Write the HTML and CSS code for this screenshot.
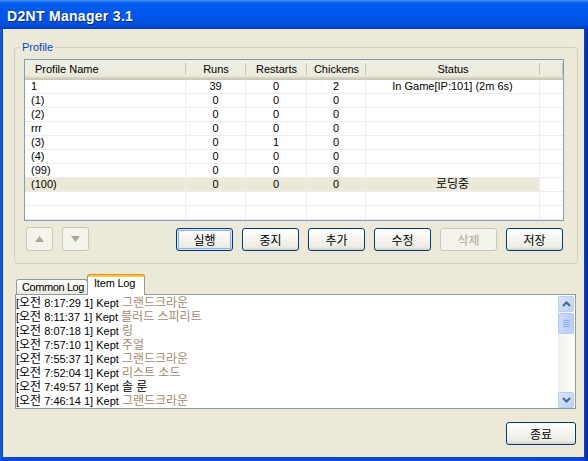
FILE: index.html
```html
<!DOCTYPE html>
<html lang="ko">
<head>
<meta charset="utf-8">
<title>D2NT Manager 3.1</title>
<link rel="stylesheet" href="styles.css">
</head>
<body>
<div class="window">
  <div class="titlebar"><span class="title">D2NT Manager 3.1</span></div>
  <div class="client">
    <div class="group">
      <div class="group-title">Profile</div>
      <div class="listview">
        <div class="lv-head">
          <div class="hc left">Profile Name</div>
          <div class="hc">Runs</div>
          <div class="hc">Restarts</div>
          <div class="hc">Chickens</div>
          <div class="hc">Status</div>
          <div class="hc filler"></div>
        </div>
        <div class="lv-row"><div class="c left">1</div><div class="c">39</div><div class="c">0</div><div class="c">2</div><div class="c">In Game[IP:101] (2m 6s)</div><div class="c filler"></div></div>
        <div class="lv-row"><div class="c left">(1)</div><div class="c">0</div><div class="c">0</div><div class="c">0</div><div class="c"></div><div class="c filler"></div></div>
        <div class="lv-row"><div class="c left">(2)</div><div class="c">0</div><div class="c">0</div><div class="c">0</div><div class="c"></div><div class="c filler"></div></div>
        <div class="lv-row"><div class="c left">rrr</div><div class="c">0</div><div class="c">0</div><div class="c">0</div><div class="c"></div><div class="c filler"></div></div>
        <div class="lv-row"><div class="c left">(3)</div><div class="c">0</div><div class="c">1</div><div class="c">0</div><div class="c"></div><div class="c filler"></div></div>
        <div class="lv-row"><div class="c left">(4)</div><div class="c">0</div><div class="c">0</div><div class="c">0</div><div class="c"></div><div class="c filler"></div></div>
        <div class="lv-row"><div class="c left">(99)</div><div class="c">0</div><div class="c">0</div><div class="c">0</div><div class="c"></div><div class="c filler"></div></div>
        <div class="lv-row selected"><div class="c left">(100)</div><div class="c">0</div><div class="c">0</div><div class="c">0</div><div class="c ko">로딩중</div><div class="c filler"></div></div>
        <div class="lv-row"><div class="c left"></div><div class="c"></div><div class="c"></div><div class="c"></div><div class="c"></div><div class="c filler"></div></div>
        <div class="lv-row"><div class="c left"></div><div class="c"></div><div class="c"></div><div class="c"></div><div class="c"></div><div class="c filler"></div></div>
      </div>
      <div class="btn-row">
        <div class="arrows">
          <button class="btn arrow" disabled><svg width="9" height="6" viewBox="0 0 9 6"><polygon points="4.5,0 9,6 0,6" fill="#ACA899"/></svg></button>
          <button class="btn arrow" disabled><svg width="9" height="6" viewBox="0 0 9 6"><polygon points="0,0 9,0 4.5,6" fill="#ACA899"/></svg></button>
        </div>
        <div class="actions">
          <button class="btn default">실행</button>
          <button class="btn">중지</button>
          <button class="btn">추가</button>
          <button class="btn">수정</button>
          <button class="btn" disabled>삭제</button>
          <button class="btn">저장</button>
        </div>
      </div>
    </div>

    <div class="tabs">
      <div class="tab">Common Log</div>
      <div class="tab active">Item Log</div>
    </div>
    <div class="logbox">
      <div class="log">
        <div class="line">[<span class="ko">오전</span> 8:17:29 1] Kept <span class="ko item">그랜드크라운</span></div>
        <div class="line">[<span class="ko">오전</span> 8:11:37 1] Kept <span class="ko item">블러드 스피리트</span></div>
        <div class="line">[<span class="ko">오전</span> 8:07:18 1] Kept <span class="ko item">링</span></div>
        <div class="line">[<span class="ko">오전</span> 7:57:10 1] Kept <span class="ko item">주얼</span></div>
        <div class="line">[<span class="ko">오전</span> 7:55:37 1] Kept <span class="ko item">그랜드크라운</span></div>
        <div class="line">[<span class="ko">오전</span> 7:52:04 1] Kept <span class="ko item">리스트 소드</span></div>
        <div class="line">[<span class="ko">오전</span> 7:49:57 1] Kept <span class="ko">솔 룬</span></div>
        <div class="line">[<span class="ko">오전</span> 7:46:14 1] Kept <span class="ko item">그랜드크라운</span></div>
      </div>
      <div class="scrollbar">
        <div class="sb-btn"><svg width="9" height="6" viewBox="0 0 9 6"><polyline points="1,5 4.5,1.5 8,5" fill="none" stroke="#4D6185" stroke-width="2"/></svg></div>
        <div class="sb-thumb"><span></span><span></span><span></span><span></span></div>
        <div class="sb-track"></div>
        <div class="sb-btn"><svg width="9" height="6" viewBox="0 0 9 6"><polyline points="1,1 4.5,4.5 8,1" fill="none" stroke="#4D6185" stroke-width="2"/></svg></div>
      </div>
    </div>

    <div class="footer"><button class="btn close">종료</button></div>
  </div>
</div>
</body>
</html>
```

FILE: styles.css
```css
* { box-sizing: border-box; }

html, body {
  margin: 0;
  padding: 0;
  width: 588px;
  height: 461px;
  overflow: hidden;
  background: #0846D4;
}

body {
  font-family: "Liberation Sans", "Noto Sans CJK KR", sans-serif;
  font-size: 11px;
  color: #000;
}

.window {
  width: 588px;
  height: 461px;
  display: flex;
  flex-direction: column;
  background: linear-gradient(to right, #1F63E6 0, #0A48D6 2px, #0846D4 583px, #0535C0 586px, #001E9A 588px);
}

.titlebar {
  height: 29px;
  flex: none;
  display: flex;
  align-items: center;
  padding: 2px 0 0 7px;
  background: linear-gradient(180deg, #4A95F8 0px, #1467F0 2px, #0058EE 5px, #0057EB 15px, #0053E2 22px, #0048D4 26px, #003EC0 29px);
}

.title {
  color: #fff;
  font-family: "Liberation Sans", sans-serif;
  font-weight: bold;
  font-size: 14px;
  letter-spacing: 0.3px;
  text-shadow: 1px 1px 0 #0A2A8A;
}

.client {
  flex: 1;
  margin: 0 4px 4px 3px;
  background: #ECE9D8;
  padding: 18px 4px 0 11px;
  display: flex;
  flex-direction: column;
}

/* group box */
.group {
  width: 564px;
  height: 217px;
  border: 1px solid #D0D0BF;
  border-radius: 4px;
  padding: 0 13px 0 9px;
}

.group-title {
  width: fit-content;
  height: 13px;
  line-height: 13px;
  margin: -7px 0 5px -4px;
  padding: 0 2px;
  background: #ECE9D8;
  color: #0046D5;
}

/* list view */
.listview {
  height: 162px;
  border: 1px solid #7F9DB9;
  background: #fff;
  overflow: hidden;
}

.lv-head,
.lv-row {
  display: grid;
  grid-template-columns: 161px 60px 61px 59px 174px 1fr;
}

.lv-head {
  height: 20px;
  background: linear-gradient(#F0EFE6 0, #EBEADB 16px, #E2DECD 17px, #D6D2C2 18px, #CBC7B8 19px, #CBC7B8 20px);
}

.hc {
  line-height: 18px;
  text-align: center;
  background: linear-gradient(#C7C5B2, #C7C5B2) right 3px / 1px 12px no-repeat;
}

.hc.left { text-align: left; padding-left: 10px; }

.lv-row {
  height: 14px;
}

.c {
  height: 14px;
  line-height: 13px;
  text-align: center;
  border-right: 1px solid #EEEEEE;
  border-bottom: 1px solid #EEEEEE;
  white-space: nowrap;
  overflow: hidden;
}

.c.left { text-align: left; padding-left: 6px; }
.c.filler { border-right: none; }
.c.ko { font-size: 12px; }

.lv-row.selected .c:not(.filler) { background: #ECE9D8; }

/* buttons */
.btn-row {
  margin-top: 7px;
  height: 23px;
  display: flex;
  justify-content: space-between;
  padding: 0 1px 0 2px;
}

.arrows, .actions {
  display: flex;
  gap: 9px;
}

.btn {
  width: 57px;
  height: 23px;
  padding: 0;
  border: 1px solid #003C74;
  border-radius: 3px;
  background: linear-gradient(#FFFFFF 0, #F7F6F1 40%, #ECEBE6 85%, #D6D0C5 100%);
  font-family: "Noto Sans CJK KR", "Liberation Sans", sans-serif;
  font-size: 12px;
  line-height: 20px;
  color: #000;
  display: flex;
  align-items: center;
  justify-content: center;
}

.btn.default {
  box-shadow: inset 0 0 0 1px #CEE7FF, inset 0 0 0 2px #8DB2EF;
}

.btn:disabled {
  border-color: #C9C7BA;
  background: #F5F4EA;
  color: #ACA899;
}

.btn.arrow {
  width: 27px;
  height: 24px;
  margin-top: -1px;
}

/* tabs */
.tabs {
  margin-top: 10px;
  height: 21px;
  display: flex;
  align-items: flex-end;
  padding-left: 2px;
}

.tab {
  height: 16px;
  line-height: 14px;
  padding: 0 0 0 5px;
  border: 1px solid #919B9C;
  border-bottom: none;
  border-radius: 3px 3px 0 0;
  background: linear-gradient(#FFFFFF, #F3F2EC 60%, #E9E7DD);
  white-space: nowrap;
  letter-spacing: -0.4px;
}

.tab:first-child { width: 72px; }

.tab.active {
  position: relative;
  z-index: 1;
  width: 58px;
  height: 21px;
  line-height: 17px;
  border-top-color: #E68B2C;
  background: linear-gradient(#FFC73C 0, #FFC73C 2px, #FFFFFF 2px, #FFFFFF 100%);
  padding: 0 0 0 6px;
  margin-left: -1px;
  letter-spacing: -0.2px;
}

.logbox {
  margin: -1px 4px 0 1px;
  height: 115px;
  border: 1px solid #919B9C;
  background: #fff;
  display: flex;
}

.log {
  flex: 1;
  padding: 1px 0 0 0;
  overflow: hidden;
}

.line {
  height: 14px;
  line-height: 14px;
  white-space: nowrap;
  font-size: 11px;
}

.line .ko {
  font-size: 12px;
}

.line .item {
  color: #A08A6C;
}

/* scrollbar */
.scrollbar {
  width: 16px;
  margin: 1px 1px 0 0;
  display: flex;
  flex-direction: column;
  background: linear-gradient(to right, #F3F1EC, #FEFEFB);
}

.sb-btn {
  height: 16px;
  flex: none;
  border: 1px solid #B9CCF2;
  border-radius: 2px;
  background: linear-gradient(135deg, #DCE7FD, #BCCFFA);
  display: flex;
  align-items: center;
  justify-content: center;
}

.sb-thumb {
  height: 21px;
  flex: none;
  margin-top: 1px;
  border: 1px solid #B3C9F3;
  border-radius: 2px;
  background: linear-gradient(to right, #CBDAFC, #BACEFA);
  display: flex;
  flex-direction: column;
  align-items: center;
  justify-content: center;
  gap: 1px;
}

.sb-thumb span {
  display: block;
  width: 7px;
  height: 1px;
  background: #8CB0F8;
}

.sb-track { flex: 1; }

/* footer */
.footer {
  margin-top: 13px;
  display: flex;
  justify-content: flex-end;
  padding-right: 4px;
}

.btn.close {
  width: 70px;
}
```
